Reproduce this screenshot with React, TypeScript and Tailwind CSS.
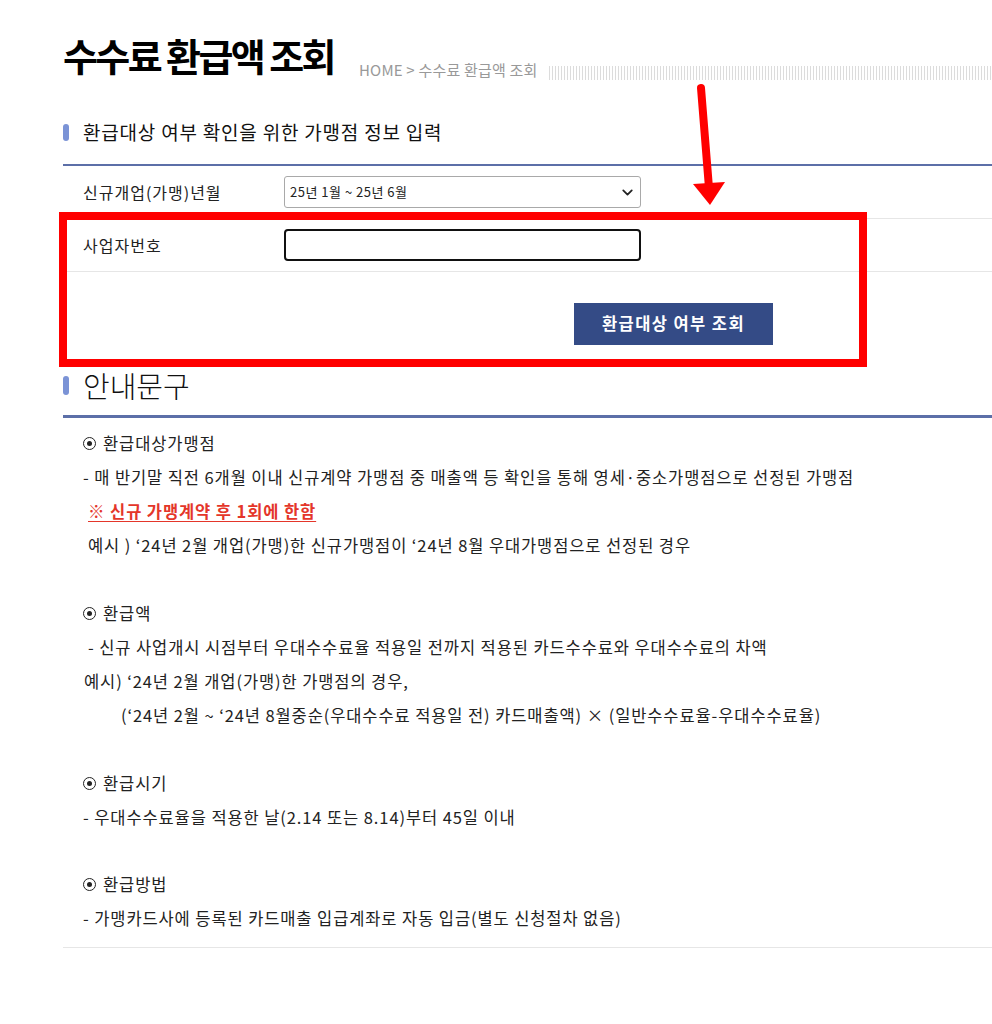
import React from "react"
import { ChevronDown } from "lucide-react"

const font = { fontFamily: '"Noto Sans CJK KR", "Noto Sans", sans-serif' }

function Bullet({ children }: { children: React.ReactNode }) {
  return (
    <div className="flex items-center h-[34px] pl-[20px] gap-[7px]">
      <span className="flex items-center justify-center w-[13px] h-[13px] rounded-full border-[1.5px] border-[#222]">
        <span className="w-[5px] h-[5px] rounded-full bg-[#222]" />
      </span>
      <span>{children}</span>
    </div>
  )
}

function Line({ className = "", children }: { className?: string; children: React.ReactNode }) {
  return <div className={`h-[34px] flex items-center whitespace-nowrap ${className}`}>{children}</div>
}

function SectionTitle({ size, children }: { size: "sm" | "lg"; children: React.ReactNode }) {
  return (
    <div className="flex items-center gap-[14px]">
      <span
        className={
          size === "sm"
            ? "w-[6px] h-[17px] rounded-full bg-[#7b93d6]"
            : "w-[6px] h-[19px] rounded-full bg-[#7b93d6]"
        }
      />
      <span
        className={
          size === "sm"
            ? "text-[19px] text-[#111] tracking-[0.8px]"
            : "text-[29px] text-[#111] font-light"
        }
      >
        {children}
      </span>
    </div>
  )
}

export default function App() {
  return (
    <div className="relative min-h-screen bg-white pl-[63px] text-[#222] overflow-hidden" style={font}>
      {/* page title */}
      <div className="flex items-end pt-[36px]">
        <h1 className="text-[38px] font-bold leading-none tracking-[-2.6px] text-black">수수료 환급액 조회</h1>
        <span className="ml-[25px] text-[15px] text-[#999] leading-none mb-[-3px] tracking-[0.2px]">
          HOME &gt; 수수료 환급액 조회
        </span>
        <div className="ml-[11px] flex-1 h-[14px] mb-[-6px] bg-[repeating-linear-gradient(90deg,#dcdcdc_0,#dcdcdc_1px,transparent_1px,transparent_3px)]" />
      </div>

      {/* input section */}
      <div className="mt-[44px]">
        <SectionTitle size="sm">환급대상 여부 확인을 위한 가맹점 정보 입력</SectionTitle>
      </div>
      <div className="mt-[17px] border-t-2 border-[#5c6fa8]">
        <div className="flex items-center h-[53px] border-b border-[#e6e6e6]">
          <span className="w-[221px] pl-[20px] text-[16px] tracking-[1px]">신규개업(가맹)년월</span>
          <div className="relative w-[357px] h-[32px]">
            <select className="appearance-none w-full h-full border border-[#a9a9a9] rounded-[3px] pl-[5px] text-[13px] tracking-[0.5px] text-[#222] bg-white outline-none">
              <option>25년 1월 ~ 25년 6월</option>
            </select>
            <ChevronDown className="absolute right-[5px] top-[8px] w-[17px] h-[17px] text-[#222] pointer-events-none" strokeWidth={2.5} />
          </div>
        </div>
        <div className="flex items-center h-[53px] border-b border-[#e6e6e6]">
          <span className="w-[221px] pl-[20px] text-[16px] tracking-[1px]">사업자번호</span>
          <input className="w-[357px] h-[32px] border-2 border-[#111] rounded-[4px] px-[6px] outline-none" />
        </div>
        <div className="h-[95px] pl-[511px] pt-[31px]">
          <button className="w-[199px] h-[42px] bg-[#344b86] text-white text-[16.5px] font-bold tracking-[1.4px]">
            환급대상 여부 조회
          </button>
        </div>
      </div>

      {/* guide section */}
      <div className="mt-[-3px]">
        <SectionTitle size="lg">안내문구</SectionTitle>
      </div>
      <div className="mt-[8px] border-t-[3px] border-[#5c6fa8] pt-[8px] pb-[12px] border-b border-b-[#e6e6e6] text-[16.5px] tracking-[0.9px]">
        <Bullet>환급대상가맹점</Bullet>
        <Line className="pl-[20px]">- 매 반기말 직전 6개월 이내 신규계약 가맹점 중 매출액 등 확인을 통해 영세·중소가맹점으로 선정된 가맹점</Line>
        <Line className="pl-[25px]">
          <span className="text-[#e4362a] font-bold underline underline-offset-[3px]">※ 신규 가맹계약 후 1회에 한함</span>
        </Line>
        <Line className="pl-[25px]">예시 ) ‘24년 2월 개업(가맹)한 신규가맹점이 ‘24년 8월 우대가맹점으로 선정된 경우</Line>
        <div className="h-[34px]" />
        <Bullet>환급액</Bullet>
        <Line className="pl-[25px]">- 신규 사업개시 시점부터 우대수수료율 적용일 전까지 적용된 카드수수료와 우대수수료의 차액</Line>
        <Line className="pl-[21px]">예시) ‘24년 2월 개업(가맹)한 가맹점의 경우,</Line>
        <Line className="pl-[58px]">(‘24년 2월 ~ ‘24년 8월중순(우대수수료 적용일 전) 카드매출액) × (일반수수료율-우대수수료율)</Line>
        <div className="h-[34px]" />
        <Bullet>환급시기</Bullet>
        <Line className="pl-[20px]">- 우대수수료율을 적용한 날(2.14 또는 8.14)부터 45일 이내</Line>
        <div className="h-[33px]" />
        <Bullet>환급방법</Bullet>
        <Line className="pl-[20px]">- 가맹카드사에 등록된 카드매출 입급계좌로 자동 입금(별도 신청절차 없음)</Line>
      </div>

      {/* annotation overlay */}
      <div className="absolute left-[59px] top-[212px] w-[808px] h-[155px] border-[8px] border-[#ff0000] pointer-events-none" />
      <svg className="absolute left-[680px] top-[78px] pointer-events-none" width="60" height="132" viewBox="0 0 60 132">
        <line x1="21" y1="10" x2="29" y2="110" stroke="#ff0000" strokeWidth="8" strokeLinecap="round" />
        <polygon points="13,106 45,104 30,127" fill="#ff0000" />
      </svg>
    </div>
  )
}
